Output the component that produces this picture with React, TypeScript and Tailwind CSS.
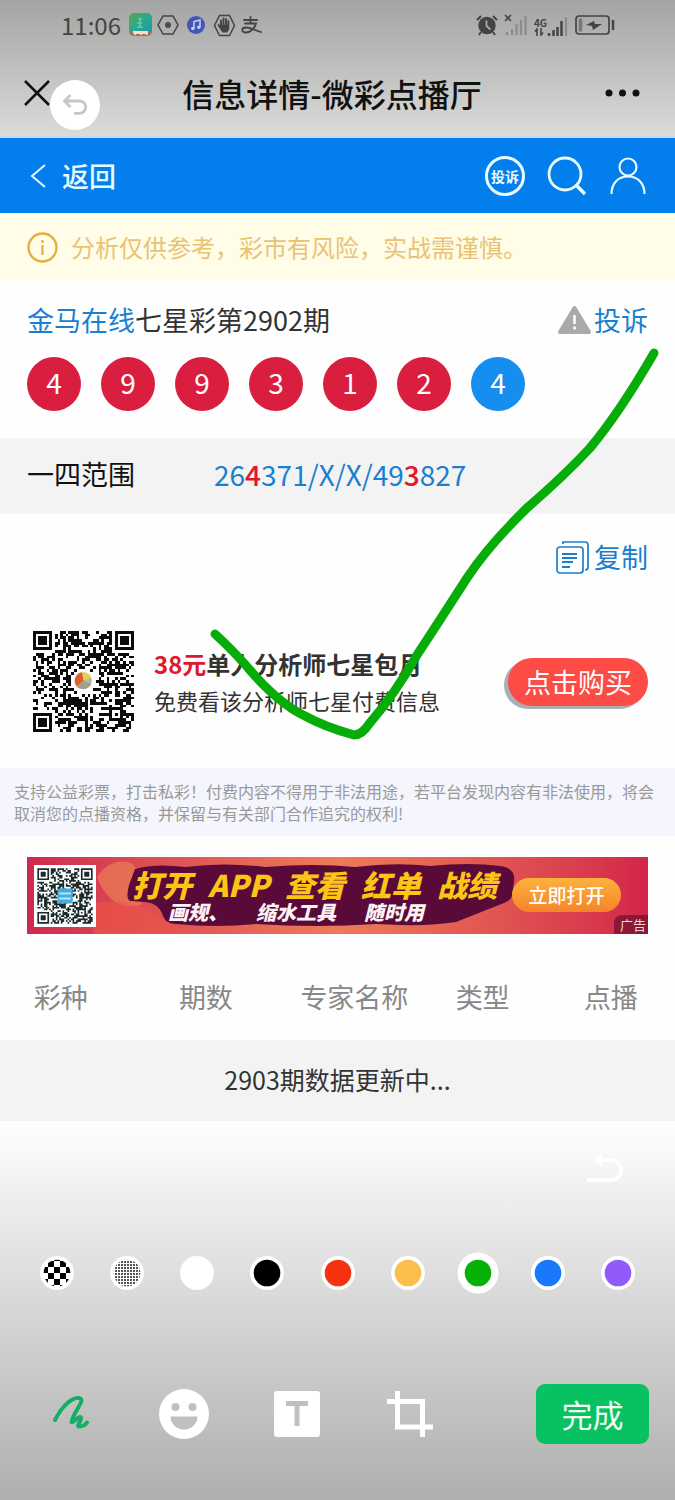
import React from "react";

const FINDER = [
  "1111111",
  "1000001",
  "1011101",
  "1011101",
  "1011101",
  "1000001",
  "1111111",
];

function qrPath(size: number, seed: number, hole: number): string {
  let s = seed;
  const next = () => {
    s = (s * 1103515245 + 12345) % 2147483648;
    return s / 2147483648;
  };
  const mid = (size - 1) / 2;
  let d = "";
  for (let y = 0; y < size; y++) {
    for (let x = 0; x < size; x++) {
      const r = next();
      let on = r > 0.48;
      const left = x < 8;
      const right = x >= size - 8;
      const top = y < 8;
      const bottom = y >= size - 8;
      if ((left && top) || (right && top) || (left && bottom)) {
        const fx = left ? x : x - (size - 7);
        const fy = top ? y : y - (size - 7);
        on = FINDER[fy]?.[fx] === "1";
      } else if (Math.abs(x - (size - 7)) <= 2 && Math.abs(y - (size - 7)) <= 2) {
        const m = Math.max(Math.abs(x - (size - 7)), Math.abs(y - (size - 7)));
        on = m !== 1;
      } else if (Math.hypot(x - mid, y - mid) < hole) {
        on = false;
      }
      if (on) d += `M${x} ${y}h1v1h-1z`;
    }
  }
  return d;
}

const QR_LARGE = qrPath(37, 71, 5);
const QR_SMALL = qrPath(33, 29, 4);

function StatusBar() {
  return (
    <div className="flex h-[50px] items-center justify-between pl-[61px] pr-[60px] text-[#444]">
      <div className="flex items-center gap-2">
        <span className="text-[24px] leading-[30px]">11:06</span>
        <svg className="size-6" viewBox="0 0 24 24" aria-hidden="true">
          <defs>
            <linearGradient id="app" x1="0" x2="1" y1="0" y2="1">
              <stop offset="0" stopColor="#58a945" />
              <stop offset="0.5" stopColor="#27a895" />
              <stop offset="1" stopColor="#2197a0" />
            </linearGradient>
          </defs>
          <rect x="0" y="0" width="23" height="23" rx="5" fill="url(#app)" />
          <path d="M9 6h4M8 10h5M8 14h6M11 6v9" stroke="#6bc9a5" strokeWidth="1.5" />
          <path d="M4 18h15v4H4z" fill="#e9e2cf" />
          <path d="M1 20l4 2M7 22h4M13 22h4M19 21l3-2" stroke="#d0603c" strokeWidth="2" />
        </svg>
        <svg className="-ml-1 size-[22px]" viewBox="0 0 22 22" fill="none" stroke="currentColor" strokeWidth="1.5" aria-hidden="true">
          <path d="M6 2h10l5 9-5 9H6l-5-9z" />
          <circle cx="11" cy="11" r="2.2" />
          <circle cx="11" cy="11" r="0.8" fill="currentColor" />
        </svg>
        <svg className="size-[18px]" viewBox="0 0 18 18" aria-hidden="true">
          <circle cx="9" cy="9" r="9" fill="#4355b8" />
          <path d="M7 12.500V5.500l6-1.500v7" stroke="#c9d0f5" strokeWidth="1.500" fill="none" />
          <circle cx="5.800" cy="12.500" r="1.700" fill="#c9d0f5" />
          <circle cx="11.800" cy="11.200" r="1.700" fill="#c9d0f5" />
        </svg>
        <svg className="size-[23px]" viewBox="0 0 23 23" fill="none" stroke="currentColor" aria-hidden="true">
          <path d="M6.500 1.500h10l5 10-5 10h-10l-5-10z" strokeWidth="1.500" />
          <path d="M8 11V6.500M10.500 10V4.500M13 10V5M15.300 11V7M7.500 14l-2-3" strokeWidth="1.900" strokeLinecap="round" />
          <path d="M7 10.500h9.200v4.500l-2 3.500H9.500L7 15z" fill="currentColor" stroke="none" />
        </svg>
        <svg className="-ml-1 size-[22px]" viewBox="0 0 22 22" fill="none" stroke="currentColor" strokeWidth="1.800" strokeLinecap="round" aria-hidden="true">
          <path d="M4 6h13M10.500 3v6M5 9.500h11c-1 4-5 9-10 9-5 0-5-5 0-5 5 0 9 3 15 4.500" />
        </svg>
      </div>
      <div className="flex items-center gap-1.5">
        <svg className="size-[22px]" viewBox="0 0 22 22" aria-hidden="true">
          <circle cx="11" cy="11.500" r="8.700" fill="currentColor" />
          <path d="M1 6l4-4M21 6l-4-4M5 18l-2 3M17 18l2 3" stroke="currentColor" strokeWidth="2" />
          <path d="M10.500 6.500v5.500l4 3.500" stroke="#aaa" strokeWidth="1.800" fill="none" />
        </svg>
        <svg className="h-[22px] w-6" viewBox="0 0 24 22" fill="none" aria-hidden="true">
          <path d="M1 1l6 6M7 1L1 7" stroke="currentColor" strokeWidth="1.600" />
          <path d="M3 21v-3M8 21v-6M12.500 21V10M17 21V6M21.500 21V2" stroke="#8b8b8b" strokeWidth="2.200" />
        </svg>
        <span className="flex h-[22px] items-end">
          <span className="flex flex-col text-[10px] leading-[11px] font-bold">
            <span>4G</span>
            <svg className="h-2 w-3" viewBox="0 0 12 8" fill="none" stroke="currentColor" strokeWidth="1.600" aria-hidden="true">
              <path d="M3 8V1L1 3.500M7 0v7l2-2.500" />
            </svg>
          </span>
          <svg className="h-5 w-[22px]" viewBox="0 0 22 20" aria-hidden="true">
            <path d="M2 20v-3M6.500 20v-6M10.500 20v-9M14.500 20V5" stroke="currentColor" strokeWidth="2.500" />
            <path d="M19 20V1" stroke="#8b8b8b" strokeWidth="2.200" />
          </svg>
        </span>
        <svg className="h-5 w-10" viewBox="0 0 40 20" fill="none" stroke="currentColor" aria-hidden="true">
          <rect x="1" y="1" width="33" height="18" rx="3" strokeWidth="1.700" />
          <path d="M38 5v10" strokeWidth="2.500" />
          <path d="M5.500 3.500v13" stroke="#777" strokeWidth="3.500" />
          <path d="M11 10l8-4 1 3h7l-9 6-1-4z" fill="currentColor" stroke="none" />
        </svg>
      </div>
    </div>
  );
}

function TitleBar() {
  return (
    <div className="relative flex h-[88px] items-center justify-between border-b-2 border-[#c3dcf0] pl-6 pr-[35px] text-[#111]">
      <button type="button" aria-label="关闭" className="flex h-10 w-[35px] items-center">
        <svg className="size-[26px]" viewBox="0 0 26 26" fill="none" stroke="currentColor" strokeWidth="2.500" aria-hidden="true">
          <path d="M1 1l24 24M25 1L1 25" />
        </svg>
      </button>
      <h1 className="text-[32px] leading-10 font-medium">信息详情-微彩点播厅</h1>
      <button type="button" aria-label="更多" className="flex h-10 items-center">
        <svg className="h-2 w-[35px]" viewBox="0 0 35 8" fill="currentColor" aria-hidden="true">
          <circle cx="4" cy="4" r="3.500" />
          <circle cx="17.500" cy="4" r="3.500" />
          <circle cx="31" cy="4" r="3.500" />
        </svg>
      </button>
      <button
        type="button"
        aria-label="撤回"
        className="absolute top-[30px] left-[50px] flex size-[50px] items-center justify-center rounded-full bg-white"
      >
        <svg className="size-[26px]" viewBox="0 0 26 26" fill="none" stroke="#c6c6c6" strokeWidth="2.800" aria-hidden="true">
          <path d="M8.500 3L2.500 9l6 6M3 9h14.500a6.200 6.200 0 0 1 0 12.400H12" />
        </svg>
      </button>
    </div>
  );
}

function NavBar() {
  return (
    <nav className="flex h-[75px] items-center justify-between bg-[#037eed] pl-[30px] pr-7 text-[#e8fbff]">
      <a href="#back" className="flex items-center gap-4">
        <svg className="h-6 w-4" viewBox="0 0 16 24" fill="none" stroke="currentColor" strokeWidth="2" aria-hidden="true">
          <path d="M15 1L2 12l13 11" />
        </svg>
        <span className="text-[27px] leading-9 font-medium">返回</span>
      </a>
      <div className="flex items-center gap-[22px]">
        <a
          href="#complain"
          className="flex size-10 items-center justify-center rounded-full border-[3px] border-current text-[14px] leading-5 font-bold"
        >
          投诉
        </a>
        <button type="button" aria-label="搜索">
          <svg className="size-10" viewBox="0 0 40 40" fill="none" stroke="currentColor" strokeWidth="2.800" aria-hidden="true">
            <circle cx="18" cy="18" r="16" />
            <path d="M28.500 28.500L38 38" strokeWidth="3.500" />
          </svg>
        </button>
        <button type="button" aria-label="我的">
          <svg className="size-[38px]" viewBox="0 0 38 38" fill="none" stroke="currentColor" strokeWidth="2.200" aria-hidden="true">
            <circle cx="19" cy="10" r="8.500" />
            <path d="M2.500 37c0-10 6-17.500 16.500-17.500S35.500 27 35.500 37" />
          </svg>
        </button>
      </div>
    </nav>
  );
}

function Notice() {
  return (
    <div className="flex h-[66px] items-center gap-[13px] bg-[#fffce8] pt-0.5 pl-[27px] text-[#e9c372]">
      <svg className="size-[31px]" viewBox="0 0 31 31" fill="none" stroke="#e8ad3c" aria-hidden="true">
        <circle cx="15.500" cy="15.500" r="14" strokeWidth="2.400" />
        <path d="M15.500 13v10M15.500 8v3" strokeWidth="2.200" />
      </svg>
      <p className="text-[24px] leading-8">分析仅供参考，彩市有风险，实战需谨慎。</p>
    </div>
  );
}

const BALLS = ["4", "9", "9", "3", "1", "2", "4"];

function Issue() {
  return (
    <section className="px-[27px] pt-[21px] pb-[27px]">
      <div className="flex h-10 items-center justify-between text-[27px] leading-10">
        <h2 className="text-[#333]">
          <a href="#expert" className="text-[#1b7fd0]">金马在线</a>七星彩第2902期
        </h2>
        <a href="#complain" className="flex items-center gap-0.5 text-[#1b7fd0]">
          <svg className="h-[30px] w-[35px]" viewBox="0 0 35 30" aria-hidden="true">
            <path d="M17.500 3L32 27H3z" fill="#aaa" stroke="#aaa" strokeWidth="4" strokeLinejoin="round" />
            <path d="M17.500 10v9M17.500 21.500v3" stroke="#fff" strokeWidth="2.500" />
          </svg>
          投诉
        </a>
      </div>
      <ul className="mt-[17px] flex gap-5">
        {BALLS.map((n, i) => (
          <li
            key={i}
            className={
              i === 6
                ? "flex size-[54px] items-center justify-center rounded-full bg-[#158eef] pb-1 text-[28px] leading-9 text-white"
                : "flex size-[54px] items-center justify-center rounded-full bg-[#da1e3f] pb-1 text-[28px] leading-9 text-white"
            }
          >
            {n}
          </li>
        ))}
      </ul>
    </section>
  );
}

function Range() {
  return (
    <dl className="flex h-[76px] items-center bg-[#f3f3f3] px-[27px] pb-1">
      <dt className="w-[187px] text-[27px] leading-9 text-[#111]">一四范围</dt>
      <dd className="text-[28px] leading-9 text-[#1b7fd0]">
        26<span className="font-medium text-[#e0182d]">4</span>371/X/X/49
        <span className="font-medium text-[#e0182d]">3</span>827
      </dd>
    </dl>
  );
}

function Promo() {
  return (
    <section className="px-[27px] pt-[23px] pb-9">
      <div className="flex h-10 justify-end">
        <button type="button" className="flex items-center gap-1 text-[27px] leading-10 text-[#1b7fd0]">
          <svg className="size-[34px]" viewBox="0 0 34 34" fill="none" stroke="currentColor" strokeWidth="1.700" aria-hidden="true">
            <rect x="1" y="7" width="26" height="26" rx="3" />
            <path d="M7 4V2h22q3 0 3 3v22q0 3-3 3" />
            <path d="M6 14h15M6 18h15M6 22h11M6 27h8" strokeWidth="2" />
          </svg>
          复制
        </button>
      </div>
      <div className="mt-[54px] flex items-center pl-1.5">
        <svg className="size-[101px] shrink-0" viewBox="0 0 37 37" role="img" aria-label="二维码" shapeRendering="crispEdges">
          <path d={QR_LARGE} fill="#0b0b0b" />
          <g shapeRendering="auto">
            <circle cx="18.500" cy="18.200" r="3" fill="#b5b8a8" />
            <path d="M18.500 18.200L16 20.300a3.200 3.200 0 0 1 2-5.200z" fill="#d9602b" />
            <path d="M18 15.200a3.200 3.200 0 0 1 3.300 1.800L18.500 18z" fill="#e6d34e" />
            <path d="M16 20.300a3.200 3.200 0 0 0 5.300-1l-2.800-1.100z" fill="#a3a08a" />
          </g>
        </svg>
        <div className="ml-5 flex-1 text-[#333]">
          <p className="text-[24px] leading-[37px] font-bold">
            <span className="text-[#e0182d]">38元</span>单人分析师七星包月
          </p>
          <p className="text-[22px] leading-[37px]">免费看该分析师七星付费信息</p>
        </div>
        <button
          type="button"
          className="h-12 w-[140px] rounded-full bg-[#fd4b45] text-[27px] leading-10 text-white shadow-[-4px_3px_0_#a9b0b3]"
        >
          点击购买
        </button>
      </div>
    </section>
  );
}

function Banner() {
  return (
    <a
      href="#open"
      className="relative mx-[27px] mt-[21px] flex h-[77px] items-center bg-linear-to-r from-[#cf2850] via-[#ee7a58] to-[#d3244a] pl-[7px]"
    >
      <svg className="absolute inset-0 h-full w-full" viewBox="0 0 621 77" preserveAspectRatio="none" aria-hidden="true">
        <path d="M70 20q14-20 34-14l14 14-4 28q-30 8-44-28z" fill="#f08e5a" opacity=".55" />
        <path d="M66 77V46q40-6 66 14l30 17z" fill="#ee5547" opacity=".6" />
        <path
          d="M108 12q20-6 50-2 40-5 80 0 50-4 90 0 40-5 75-1 40-4 70 0 16 2 14 16l-2 14q-2 5-8 7l-48 19q-30 5-80 2-60 4-120 0-40 4-80 0-10 0-13-8-4-13-18-14l-14-1q-6-1-2-16z"
          fill="#590a38"
        />
      </svg>
      <svg className="relative size-[62px] shrink-0 bg-white" viewBox="-2 -2 37 37" role="img" aria-label="APP二维码">
        <path d={QR_SMALL} fill="#1b2b2b" />
        <rect x="12" y="12" width="9" height="9" rx="1" fill="#41aee0" />
        <path d="M13 15h7M13 18h7" stroke="#b9e6f7" strokeWidth="1.200" />
      </svg>
      <div className="relative ml-9 italic">
        <p className="flex gap-4 text-[30px] leading-[32px] font-black whitespace-nowrap text-[#fcc516]">
          <span>打开</span>
          <span>APP</span>
          <span>查看</span>
          <span>红单</span>
          <span>战绩</span>
        </p>
        <p className="flex gap-7 pl-9 text-[20px] leading-6 font-black whitespace-nowrap text-[#fdf3f6]">
          <span>画规、</span>
          <span>缩水工具</span>
          <span>随时用</span>
        </p>
      </div>
      <span className="absolute top-[21px] right-[27px] flex h-[34px] w-[109px] items-center justify-center rounded-full bg-linear-to-b from-[#fcb23e] to-[#f4842a] text-[19px] leading-6 font-medium text-white">
        立即打开
      </span>
      <span className="absolute right-0 bottom-0 rounded-tl-lg bg-[#8a1836] pr-0.5 pl-1.5 text-[13px] leading-[19px] text-[#f6d5da]">
        广告
      </span>
    </a>
  );
}

function Records() {
  return (
    <table className="mt-5 w-full table-fixed text-center">
      <thead>
        <tr className="h-[86px] text-[27px] leading-9 text-[#888]">
          <th className="w-[18%] p-0 font-normal">彩种</th>
          <th className="w-[25%] p-0 font-normal">期数</th>
          <th className="w-[19%] p-0 font-normal">专家名称</th>
          <th className="w-[19%] p-0 font-normal">类型</th>
          <th className="w-[19%] p-0 font-normal">点播</th>
        </tr>
      </thead>
      <tbody>
        <tr className="h-[81px] bg-[#f3f3f3] text-[25px] leading-9 text-[#333]">
          <td colSpan={5} className="p-0 pb-1">2903期数据更新中...</td>
        </tr>
      </tbody>
    </table>
  );
}

const SWATCHES = [
  { name: "马赛克", fill: "url(#checks)" },
  { name: "模糊", fill: "url(#dots)" },
  { name: "白色", fill: "#ffffff" },
  { name: "黑色", fill: "#000000" },
  { name: "红色", fill: "#f5330e" },
  { name: "黄色", fill: "#fbbe4d" },
  { name: "绿色", fill: "#06b106" },
  { name: "蓝色", fill: "#1979fc" },
  { name: "紫色", fill: "#915afb" },
];

function Editor() {
  return (
    <footer className="bg-linear-to-b from-white to-[#afafaf] pt-[27px] pb-14">
      <svg className="absolute size-0" aria-hidden="true">
        <defs>
          <pattern id="checks" x="18" y="15" width="12" height="12" patternUnits="userSpaceOnUse">
            <rect width="12" height="12" fill="#fff" />
            <path d="M0 0h6v6H0zM6 6h6v6H6z" />
          </pattern>
          <pattern id="dots" width="3" height="3" patternUnits="userSpaceOnUse">
            <rect width="3" height="3" fill="#fff" />
            <path d="M0 0h2v2H0z" fill="#555" />
          </pattern>
        </defs>
      </svg>
      <div className="flex h-10 items-center justify-end pr-[51px]">
        <button type="button" aria-label="撤销">
          <svg className="h-[30px] w-[38px]" viewBox="0 0 38 30" fill="none" stroke="#fff" strokeWidth="4" aria-hidden="true">
            <path d="M12 7h13a10 10 0 0 1 0 20H1" />
            <path d="M16 0v14L8 7z" fill="#fff" stroke="none" />
          </svg>
        </button>
      </div>
      <div className="mt-16 flex items-center justify-between px-9">
        {SWATCHES.map((s, i) => (
          <button key={s.name} type="button" aria-label={s.name} aria-pressed={i === 6}>
            <svg className="size-[42px]" viewBox="0 0 42 42" aria-hidden="true">
              <circle cx="21" cy="21" r={i === 6 ? 20.5 : 17} fill="#fff" />
              <circle cx="21" cy="21" r="13.300" fill={s.fill} />
            </svg>
          </button>
        ))}
      </div>
      <div className="mt-[90px] flex h-[60px] items-center justify-between pr-[26px] pl-3.5">
        <div className="grid grid-cols-[repeat(4,113px)] justify-items-center">
          <button type="button" aria-label="涂鸦">
            <svg className="size-[50px]" viewBox="0 0 50 50" fill="none" stroke="#16ae66" strokeWidth="4" strokeLinecap="round" strokeLinejoin="round" aria-hidden="true">
              <path d="M9 31C15 19 25 8 33 9c8 1-6 14-7.500 24 3.500 0 6.500-6 9-5 3 2-5 9-1.500 9.500 3 0 6-1 8-4" />
            </svg>
          </button>
          <button type="button" aria-label="表情">
            <svg className="size-[50px]" viewBox="0 0 50 50" aria-hidden="true">
              <circle cx="25" cy="25" r="25" fill="#fff" />
              <circle cx="16.500" cy="18" r="4" fill="#c0c0c0" />
              <circle cx="33.500" cy="18" r="4" fill="#c0c0c0" />
              <path d="M11.500 27.500h27a13.500 13 0 0 1-27 0z" fill="#c0c0c0" />
            </svg>
          </button>
          <button type="button" aria-label="文字" className="flex items-center">
            <svg className="size-[46px]" viewBox="0 0 46 46" aria-hidden="true">
              <rect width="46" height="46" rx="3" fill="#fff" />
              <path d="M12 12.500h22M23 12.500v22.500" stroke="#c0c0c0" strokeWidth="5" />
            </svg>
          </button>
          <button type="button" aria-label="裁剪" className="flex items-center">
            <svg className="size-[46px]" viewBox="0 0 46 46" fill="none" stroke="#fff" strokeWidth="5" aria-hidden="true">
              <path d="M10.500 0v36H46M0 10.500h35.500V46" />
            </svg>
          </button>
        </div>
        <button type="button" className="h-[60px] w-[113px] rounded-[9px] bg-[#08c160] text-[31px] leading-10 text-[#f0fff6]">
          完成
        </button>
      </div>
    </footer>
  );
}

function Doodle() {
  return (
    <svg className="pointer-events-none absolute top-[340px] left-0 h-[410px] w-full" viewBox="0 340 675 410" fill="none" aria-hidden="true">
      <path
        d="M215 634Q235 652 256 677Q282 705 305 716Q325 727 354 735Q362 735 369 724Q395 694 417 655Q440 620 467 578Q488 546 527 508Q565 475 590 448Q620 412 654 353"
        stroke="#06ad08"
        strokeWidth="9"
        strokeLinecap="round"
        strokeLinejoin="round"
      />
    </svg>
  );
}

export default function App() {
  return (
    <div className="relative min-h-screen bg-[#fefefe] font-['Noto_Sans_CJK_SC',sans-serif]">
      <header className="bg-linear-to-b from-[#a4a4a4] to-[#dcdcda]">
        <StatusBar />
        <TitleBar />
      </header>
      <NavBar />
      <main>
        <Notice />
        <Issue />
        <Range />
        <Promo />
        <p className="bg-[#f5f5fd] px-3.5 py-3 text-[16px] leading-[22px] text-[#999]">
          支持公益彩票，打击私彩！付费内容不得用于非法用途，若平台发现内容有非法使用，将会取消您的点播资格，并保留与有关部门合作追究的权利!
        </p>
        <Banner />
        <Records />
      </main>
      <Editor />
      <Doodle />
    </div>
  );
}
